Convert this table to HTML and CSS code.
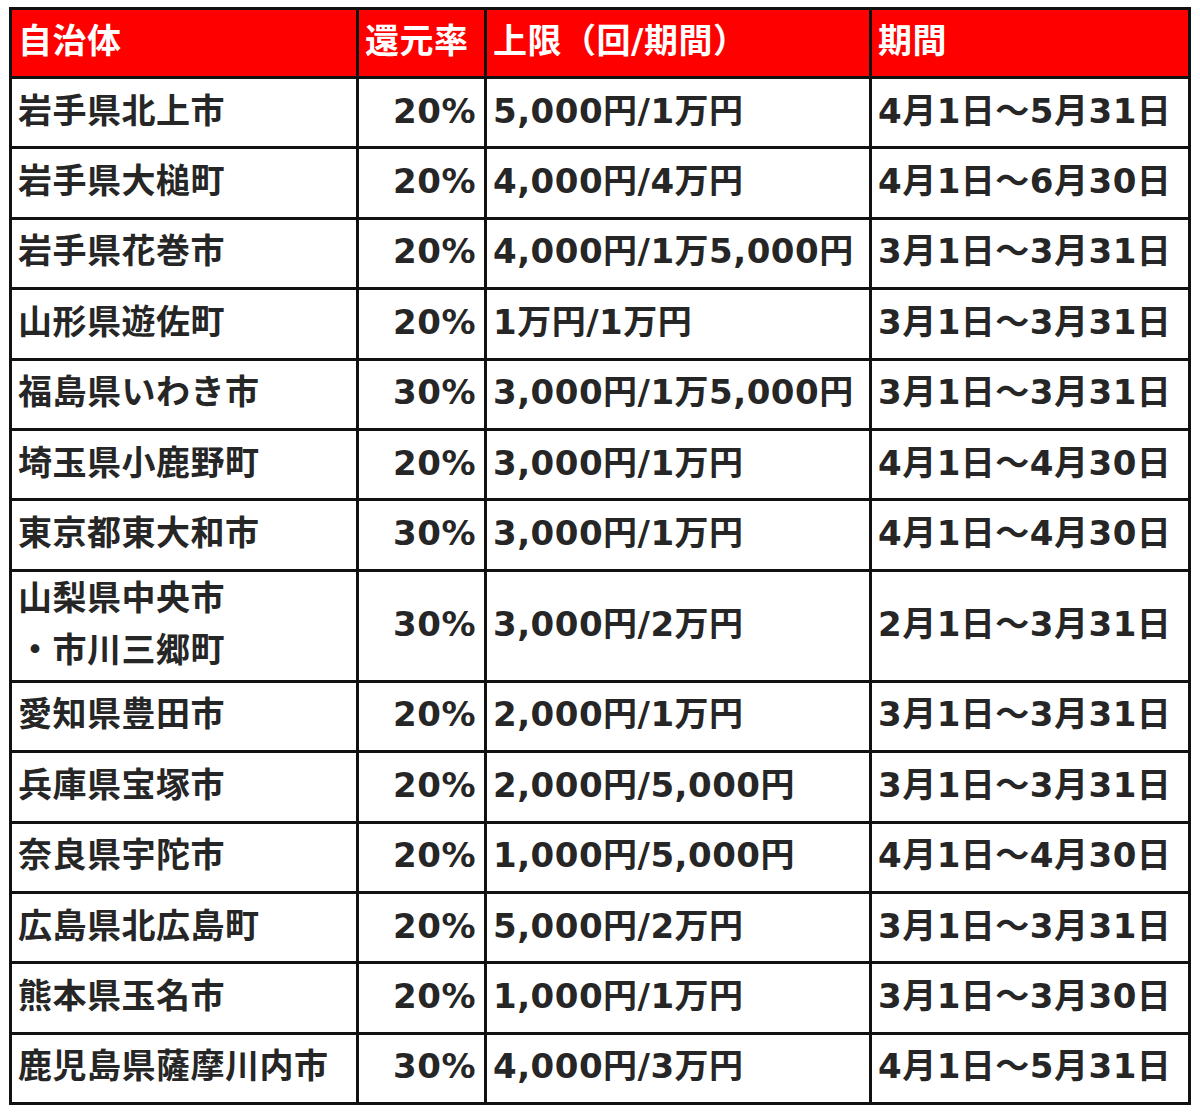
FILE: index.html
```html
<!DOCTYPE html>
<html lang="ja">
<head>
<meta charset="utf-8">
<title>自治体 還元率</title>
<link rel="stylesheet" href="styles.css">
</head>
<body>
<table class="tbl">
  <colgroup>
    <col class="c1"><col class="c2"><col class="c3"><col class="c4">
  </colgroup>
  <thead>
    <tr class="head"><th>自治体</th><th>還元率</th><th>上限（回/期間）</th><th>期間</th></tr>
  </thead>
  <tbody>
    <tr><td>岩手県北上市</td><td class="rate">20%</td><td>5,000円/1万円</td><td>4月1日～5月31日</td></tr>
    <tr><td>岩手県大槌町</td><td class="rate">20%</td><td>4,000円/4万円</td><td>4月1日～6月30日</td></tr>
    <tr><td>岩手県花巻市</td><td class="rate">20%</td><td>4,000円/1万5,000円</td><td>3月1日～3月31日</td></tr>
    <tr><td>山形県遊佐町</td><td class="rate">20%</td><td>1万円/1万円</td><td>3月1日～3月31日</td></tr>
    <tr><td>福島県いわき市</td><td class="rate">30%</td><td>3,000円/1万5,000円</td><td>3月1日～3月31日</td></tr>
    <tr><td>埼玉県小鹿野町</td><td class="rate">20%</td><td>3,000円/1万円</td><td>4月1日～4月30日</td></tr>
    <tr><td>東京都東大和市</td><td class="rate">30%</td><td>3,000円/1万円</td><td>4月1日～4月30日</td></tr>
    <tr class="tall"><td>山梨県中央市<br>・市川三郷町</td><td class="rate">30%</td><td>3,000円/2万円</td><td>2月1日～3月31日</td></tr>
    <tr><td>愛知県豊田市</td><td class="rate">20%</td><td>2,000円/1万円</td><td>3月1日～3月31日</td></tr>
    <tr><td>兵庫県宝塚市</td><td class="rate">20%</td><td>2,000円/5,000円</td><td>3月1日～3月31日</td></tr>
    <tr><td>奈良県宇陀市</td><td class="rate">20%</td><td>1,000円/5,000円</td><td>4月1日～4月30日</td></tr>
    <tr><td>広島県北広島町</td><td class="rate">20%</td><td>5,000円/2万円</td><td>3月1日～3月31日</td></tr>
    <tr><td>熊本県玉名市</td><td class="rate">20%</td><td>1,000円/1万円</td><td>3月1日～3月30日</td></tr>
    <tr><td>鹿児島県薩摩川内市</td><td class="rate">30%</td><td>4,000円/3万円</td><td>4月1日～5月31日</td></tr>
  </tbody>
</table>
</body>
</html>
```
FILE: styles.css
```css
html, body {
  margin: 0;
  padding: 0;
  background: #ffffff;
}
body {
  font-family: "DejaVu Sans", "Noto Sans CJK JP", sans-serif;
  font-weight: bold;
  font-size: 34px;
  letter-spacing: 0.5px;
  color: #262626;
}
.tbl {
  margin: 7px 0 0 9px;
  border-collapse: collapse;
  table-layout: fixed;
  width: 1179px;
}
.c1 { width: 347px; }
.c2 { width: 128px; }
.c3 { width: 385px; }
.c4 { width: 319px; }
.tbl th, .tbl td {
  border: 3px solid #111111;
  padding: 0 6px 4px 6px;
  text-align: left;
  vertical-align: middle;
  white-space: nowrap;
  line-height: 52px;
  height: 64px;
  box-sizing: border-box;
  overflow: hidden;
}
.tbl th {
  background: #ff0000;
  color: #ffffff;
  font-weight: bold;
  height: 66px;
}
.tbl tr { height: 70.4px; }
.tbl tr.head { height: 69px; }
.tbl tr.tall { height: 110px; }
.tbl tr.tall td { height: 104px; }
.tbl td.rate {
  text-align: right;
  padding-right: 8px;
}
```
